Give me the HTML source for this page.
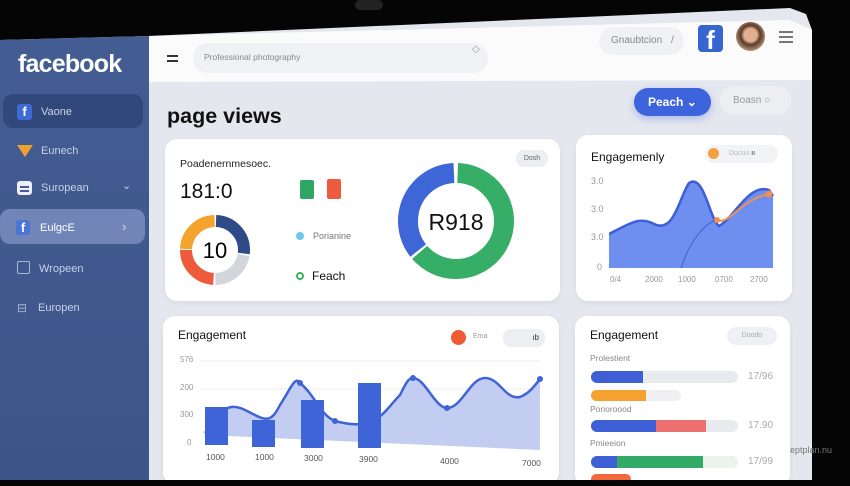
<!DOCTYPE html>
<html><head><meta charset="utf-8"><style>
*{margin:0;padding:0;box-sizing:border-box}
body{width:850px;height:480px;background:#050505;position:relative;overflow:hidden;font-family:"Liberation Sans",sans-serif}
.a{position:absolute}
#scr{position:absolute;left:0;top:0;width:812px;height:480px;background:#e5e7ee;clip-path:polygon(0 40px,148px 36px,790px 8px,806px 14px,812px 30px,812px 480px,0 480px)}
.side{left:0;top:0;width:149px;height:480px;background:linear-gradient(180deg,#445e93,#3d5488)}
.nav{color:#c8d1e6;font-size:11px}
.card{background:#fff;border-radius:12px;box-shadow:0 2px 6px rgba(0,0,0,.06)}
.gt{color:#999;font-size:9px}
.fb{background:#3d6ad6;border-radius:3px;color:#fff;font-weight:bold;text-align:center}
</style></head><body>
<div class="a" style="left:355px;top:0;width:28px;height:10px;border-radius:5px;background:#222"></div>
<div id="scr">
 <div class="a side"></div>
 <div class="a" style="left:18px;top:50px;color:#fff;font-size:25px;font-weight:bold;letter-spacing:-0.8px">facebook</div>
 <div class="a" style="left:3px;top:94px;width:140px;height:34px;border-radius:10px;background:#33487a"></div>
 <div class="a fb" style="left:17px;top:104px;width:15px;height:16px;font-size:13px">f</div>
 <div class="a nav" style="left:41px;top:106px">Vaone</div>
 <div class="a" style="left:17px;top:145px;width:0;height:0;border-left:8px solid transparent;border-right:8px solid transparent;border-top:12px solid #f0a030"></div>
 <div class="a nav" style="left:41px;top:145px">Eunech</div>
 <div class="a" style="left:17px;top:181px;width:15px;height:14px;border-radius:3px;background:#eef"></div>
 <div class="a" style="left:20px;top:186px;width:9px;height:1.5px;background:#445e93"></div>
 <div class="a" style="left:20px;top:190px;width:9px;height:1.5px;background:#445e93"></div>
 <div class="a nav" style="left:41px;top:182px">Suropean</div>
 <div class="a nav" style="left:122px;top:179px">⌄</div>
 <div class="a" style="left:0;top:209px;width:145px;height:35px;border-radius:10px;background:#7186b6"></div>
 <div class="a fb" style="left:16px;top:220px;width:14px;height:15px;font-size:13px;background:#4b74d8">f</div>
 <div class="a" style="left:40px;top:222px;color:#fff;font-size:11px">EulgcE</div>
 <div class="a" style="left:122px;top:219px;color:#dde;font-size:13px">›</div>
 <div class="a" style="left:17px;top:261px;width:13px;height:13px;border:1.5px solid #aab6d2;border-radius:2px"></div>
 <div class="a nav" style="left:39px;top:263px">Wropeen</div>
 <div class="a" style="left:17px;top:301px;color:#aab6d2;font-size:12px">⊟</div>
 <div class="a nav" style="left:38px;top:302px">Europen</div>

 <div class="a" style="left:149px;top:20px;width:663px;height:62px;background:#fbfbfc;clip-path:polygon(0 16px,641px 0,663px 10px,663px 60px,0 62px)"></div>
 <div class="a" style="left:167px;top:55px;width:11px;height:2px;background:#333;box-shadow:0 5px 0 #333"></div>
 <div class="a" style="left:193px;top:43px;width:295px;height:30px;border-radius:15px;background:#f0f1f4"></div>
 <div class="a" style="left:204px;top:52px;color:#888;font-size:8.5px">Professional photography</div>
 <div class="a" style="left:472px;top:44px;color:#999;font-size:10px">◇</div>
 <div class="a" style="left:599px;top:27px;width:85px;height:28px;border-radius:14px;background:#f0f1f4"></div>
 <div class="a" style="left:611px;top:35px;color:#888;font-size:10px">Gnaubtcion <span style="margin-left:6px">/</span></div>
 <div class="a fb" style="left:698px;top:25px;width:25px;height:27px;font-size:26px;line-height:30px;border-radius:4px;background:#3465d1">f</div>
 <div class="a" style="left:736px;top:22px;width:29px;height:29px;border-radius:50%;background:radial-gradient(circle at 50% 45%,#e0b090 0 30%,#5a3a28 45%,#c8a888 80%)"></div>
 <div class="a" style="left:779px;top:31px;width:14px;height:2px;background:#777;box-shadow:0 5px 0 #777,0 10px 0 #777"></div>

 <div class="a" style="left:167px;top:104px;font-size:21.5px;font-weight:bold;color:#111">page views</div>
 <div class="a" style="left:634px;top:88px;width:77px;height:28px;border-radius:14px;background:#3d63dd;color:#fff;font-size:12px;font-weight:bold;line-height:28px;padding-left:14px;box-shadow:0 3px 8px rgba(61,99,221,.35)">Peach ⌄</div>
 <div class="a" style="left:720px;top:86px;width:71px;height:29px;border-radius:14px;background:#eceef2;color:#999;font-size:10px;line-height:29px;padding-left:13px">Boasn ○</div>

 <div class="a card" style="left:165px;top:139px;width:395px;height:162px"></div>
 <div class="a" style="left:180px;top:158px;font-size:10.5px;color:#222">Poadenernmesoec.</div>
 <div class="a" style="left:180px;top:180px;font-size:21px;color:#111">181:0</div>
 <svg class="a" style="left:178px;top:212px" width="74" height="76" viewBox="0 0 74 76">
  <g fill="none" stroke-width="12">
  <circle cx="37" cy="38" r="29" stroke="#2f4b87" stroke-dasharray="48 200" transform="rotate(-88 37 38)"/>
  <circle cx="37" cy="38" r="29" stroke="#d4d5da" stroke-dasharray="40 200" transform="rotate(10 37 38)"/>
  <circle cx="37" cy="38" r="29" stroke="#ee5a3c" stroke-dasharray="44 200" transform="rotate(93 37 38)"/>
  <circle cx="37" cy="38" r="29" stroke="#f4a32c" stroke-dasharray="44 200" transform="rotate(182 37 38)"/>
  </g>
  <text x="37" y="46" text-anchor="middle" font-family="Liberation Sans" font-size="22">10</text>
 </svg>
 <div class="a" style="left:300px;top:180px;width:14px;height:19px;background:#2fa664;border-radius:2px"></div>
 <div class="a" style="left:327px;top:179px;width:14px;height:20px;background:#ed5a40;border-radius:2px"></div>
 <div class="a" style="left:296px;top:232px;width:8px;height:8px;border-radius:50%;background:#6cc8ee"></div>
 <div class="a" style="left:313px;top:231px;font-size:9px;color:#777">Porianine</div>
 <div class="a" style="left:296px;top:272px;width:8px;height:8px;border-radius:50%;border:2.5px solid #3bb35f"></div>
 <div class="a" style="left:312px;top:269px;font-size:12px;color:#111">Feach</div>
 <svg class="a" style="left:396px;top:160px" width="122" height="122" viewBox="0 0 122 122">
  <g fill="none" stroke-width="20">
  <circle cx="60" cy="61" r="48" stroke="#36ae67" stroke-dasharray="190 400" transform="rotate(-88 60 61)"/>
  <circle cx="60" cy="61" r="48" stroke="#3f66d6" stroke-dasharray="105 400" transform="rotate(142 60 61)"/>
  </g>
  <text x="60" y="70" text-anchor="middle" font-family="Liberation Sans" font-size="23" fill="#111">R918</text>
 </svg>
 <div class="a" style="left:516px;top:150px;width:32px;height:17px;border-radius:8px;background:#eceef1;font-size:7px;color:#666;text-align:center;line-height:17px">Dosh</div>

 <div class="a card" style="left:576px;top:135px;width:216px;height:166px"></div>
 <div class="a" style="left:591px;top:150px;font-size:12px;color:#111">Engagemenly</div>
 <div class="a" style="left:705px;top:145px;width:73px;height:18px;border-radius:9px;background:#f2f3f6"></div>
 <div class="a" style="left:708px;top:148px;width:11px;height:11px;border-radius:50%;background:#f4a040"></div>
 <div class="a" style="left:729px;top:150px;font-size:7px;color:#bbb">Docuo <b style="color:#777">ıı</b></div>
 <div class="a gt" style="left:591px;top:176px">3.0</div>
 <div class="a gt" style="left:591px;top:204px">3.0</div>
 <div class="a gt" style="left:591px;top:232px">3.0</div>
 <div class="a gt" style="left:597px;top:262px">0</div>
 <svg class="a" style="left:609px;top:178px" width="166" height="92" viewBox="0 0 166 92">
  <path d="M0 56 C20 46 30 38 45 46 C65 56 70 20 80 5 C95 -5 100 40 110 48 C125 40 140 5 160 12 L164 18 L164 90 L0 90 Z" fill="#6e8ff0"/>
  <path d="M0 56 C20 46 30 38 45 46 C65 56 70 20 80 5 C95 -5 100 40 110 48 C125 40 140 5 160 12 L164 18" fill="none" stroke="#3d5fd6" stroke-width="2.5"/>
  <path d="M108 42 C120 48 130 22 160 16" fill="none" stroke="#f09050" stroke-width="2"/>
  <path d="M72 90 C80 65 95 45 108 42" fill="none" stroke="#3d5fd6" stroke-width="1"/>
  <circle cx="108" cy="42" r="3" fill="#f09050"/><circle cx="160" cy="16" r="3.5" fill="#f09050"/>
 </svg>
 <div class="a gt" style="left:610px;top:275px;font-size:8px">0/4</div>
 <div class="a gt" style="left:645px;top:275px;font-size:8px">2000</div>
 <div class="a gt" style="left:678px;top:275px;font-size:8px">1000</div>
 <div class="a gt" style="left:715px;top:275px;font-size:8px">0700</div>
 <div class="a gt" style="left:750px;top:275px;font-size:8px">2700</div>

 <div class="a card" style="left:163px;top:316px;width:396px;height:168px"></div>
 <div class="a" style="left:178px;top:328px;font-size:12px;color:#111">Engagement</div>
 <div class="a" style="left:451px;top:330px;width:15px;height:15px;border-radius:50%;background:#ee5a33"></div>
 <div class="a" style="left:473px;top:333px;font-size:7px;color:#999">Ema</div>
 <div class="a" style="left:503px;top:329px;width:42px;height:18px;border-radius:8px;background:#eceef1;font-size:8px;color:#333;text-align:right;padding-right:6px;line-height:18px">ıb</div>
 <div class="a gt" style="left:180px;top:355px;font-size:8px">576</div>
 <div class="a gt" style="left:180px;top:383px;font-size:8px">200</div>
 <div class="a gt" style="left:180px;top:410px;font-size:8px">300</div>
 <div class="a gt" style="left:187px;top:438px;font-size:8px">0</div>
 <svg class="a" style="left:200px;top:355px" width="345" height="100" viewBox="0 0 345 100">
  <line x1="0" y1="6" x2="340" y2="6" stroke="#eee"/>
  <line x1="0" y1="34" x2="340" y2="34" stroke="#eee"/>
  <path d="M5 78 C20 60 25 45 45 55 C65 65 70 70 80 50 C90 35 95 20 100 28 C115 40 120 60 135 66 C150 70 160 70 170 68 C185 60 190 50 200 40 C205 30 208 23 213 23 C225 23 235 53 247 53 C262 53 270 23 285 23 C300 23 305 45 320 42 C330 38 335 30 340 24 L340 95 L5 80 Z" fill="#c3cdf2"/>
  <rect x="5" y="52" width="23" height="38" fill="#3e64d8"/>
  <rect x="52" y="65" width="23" height="27" fill="#3e64d8"/>
  <rect x="101" y="45" width="23" height="48" fill="#3e64d8"/>
  <rect x="158" y="28" width="23" height="65" fill="#3e64d8"/>
  <path d="M5 78 C20 60 25 45 45 55 C65 65 70 70 80 50 C90 35 95 20 100 28 C115 40 120 60 135 66 C150 70 160 70 170 68 C185 60 190 50 200 40 C205 30 208 23 213 23 C225 23 235 53 247 53 C262 53 270 23 285 23 C300 23 305 45 320 42 C330 38 335 30 340 24" fill="none" stroke="#3e64d8" stroke-width="2.5"/>
  <circle cx="100" cy="28" r="3" fill="#3e64d8"/><circle cx="135" cy="66" r="3" fill="#3e64d8"/>
  <circle cx="213" cy="23" r="3" fill="#3e64d8"/><circle cx="247" cy="53" r="3" fill="#3e64d8"/><circle cx="340" cy="24" r="3" fill="#3e64d8"/>
 </svg>
 <div class="a" style="left:206px;top:452px;font-size:8.5px;color:#555">1000</div>
 <div class="a" style="left:255px;top:452px;font-size:8.5px;color:#555">1000</div>
 <div class="a" style="left:304px;top:453px;font-size:8.5px;color:#555">3000</div>
 <div class="a" style="left:359px;top:454px;font-size:8.5px;color:#555">3900</div>
 <div class="a" style="left:440px;top:456px;font-size:8.5px;color:#555">4000</div>
 <div class="a" style="left:522px;top:458px;font-size:8.5px;color:#555">7000</div>

 <div class="a card" style="left:575px;top:316px;width:215px;height:170px"></div>
 <div class="a" style="left:590px;top:328px;font-size:12px;color:#111">Engagement</div>
 <div class="a" style="left:727px;top:327px;width:50px;height:18px;border-radius:9px;background:#eef0f3;font-size:7px;color:#aaa;text-align:center;line-height:18px">Doodo</div>
 <div class="a" style="left:590px;top:353px;font-size:8.5px;color:#888">Prolestient</div>
 <div class="a" style="left:591px;top:371px;width:147px;height:12px;border-radius:6px;background:#e9eaee"></div>
 <div class="a" style="left:591px;top:371px;width:52px;height:12px;border-radius:6px 0 0 6px;background:#3e5fd6"></div>
 <div class="a" style="left:748px;top:371px;font-size:10px;color:#aaa">17/96</div>
 <div class="a" style="left:591px;top:390px;width:90px;height:11px;border-radius:6px;background:#f0f0f2"></div>
 <div class="a" style="left:591px;top:390px;width:55px;height:11px;border-radius:6px 0 0 6px;background:#f5a130"></div>
 <div class="a" style="left:590px;top:404px;font-size:8.5px;color:#888">Porioroood</div>
 <div class="a" style="left:591px;top:420px;width:147px;height:12px;border-radius:6px;background:#e9eaee"></div>
 <div class="a" style="left:591px;top:420px;width:65px;height:12px;border-radius:6px 0 0 6px;background:#3e5fd6"></div>
 <div class="a" style="left:656px;top:420px;width:50px;height:12px;background:#ec7070"></div>
 <div class="a" style="left:748px;top:420px;font-size:10px;color:#aaa">17.90</div>
 <div class="a" style="left:590px;top:438px;font-size:8.5px;color:#888">Pmieeion</div>
 <div class="a" style="left:591px;top:456px;width:147px;height:12px;border-radius:6px;background:#eaf3ec"></div>
 <div class="a" style="left:591px;top:456px;width:26px;height:12px;border-radius:6px 0 0 6px;background:#3e5fd6"></div>
 <div class="a" style="left:617px;top:456px;width:86px;height:12px;background:#33aa66"></div>
 <div class="a" style="left:748px;top:456px;font-size:10px;color:#aaa">17/99</div>
 <div class="a" style="left:591px;top:474px;width:40px;height:10px;border-radius:5px;background:#f26a3a"></div>
</div>
<div class="a" style="left:790px;top:445px;font-size:9px;color:#777">eptplan.nu</div>
</body></html>
